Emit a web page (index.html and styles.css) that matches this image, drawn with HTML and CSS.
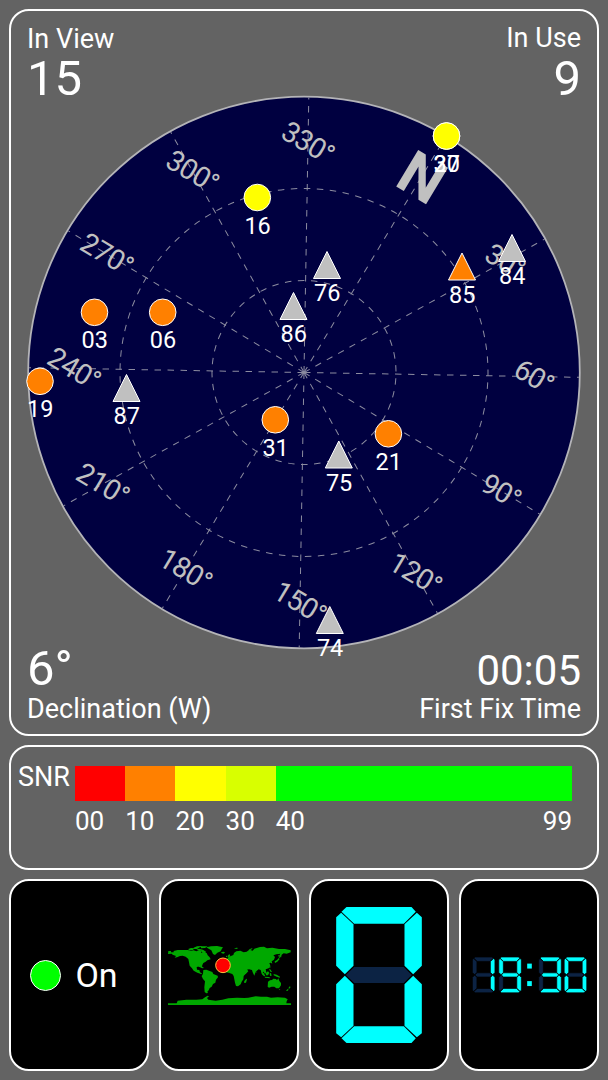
FILE: index.html
```html
<!DOCTYPE html>
<html lang="en">
<head>
    <meta charset="UTF-8">
    <meta name="viewport" content="width=device-width, initial-scale=1.0">
    <title>GPS Status</title>
    <link rel="stylesheet" href="styles.css">
</head>
<body>

<div class="panel sky-panel">
    <div class="sky-header">
        <div class="stat">
            <div class="label">In View</div>
            <div class="value">15</div>
        </div>
        <div class="stat right">
            <div class="label in-use">In Use</div>
            <div class="value">9</div>
        </div>
    </div>

    <svg class="sky" viewBox="11 97 586 553">
        <circle class="disc" cx="304" cy="372.5" r="275.8"/>
        <!-- compass grid, turned to the current heading -->
        <g transform="translate(304 372.5) rotate(31)">
            <g id="grid" class="grid"></g>
            <g id="degrees" class="degrees"></g>
            <text class="north" x="0.5" y="-207">N</text>
        </g>
        <g id="satellites"></g>
    </svg>

    <div class="sky-footer">
        <div class="stat">
            <div class="value">6°</div>
            <div class="label">Declination (W)</div>
        </div>
        <div class="stat right">
            <div class="value time">00:05</div>
            <div class="label">First Fix Time</div>
        </div>
    </div>
</div>

<div class="panel snr-panel">
    <div class="snr-title">SNR</div>
    <div class="snr-scale">
        <div class="step"><div class="bar red"></div>00</div>
        <div class="step"><div class="bar orange"></div>10</div>
        <div class="step"><div class="bar yellow"></div>20</div>
        <div class="step"><div class="bar lime"></div>30</div>
        <div class="step wide"><div class="bar green"></div><span>40</span><span>99</span></div>
    </div>
</div>

<div class="tiles">
    <div class="panel tile status">
        <span class="lamp"></span>
        <span>On</span>
    </div>
    <div class="panel tile">
        <svg class="map" viewBox="21 33 369 177">
            <!-- North America -->
            <path d="M22 48h8v4h8v-4l12-3h30l10 2 8-1 8 3 9 -4 8 2-3 7 8-2 9 2 3 7 6 6 3 6-10 3-5 4-7 4-3 6-2 9-4-5-11 2 1 8 7 1 2 7 7 4-4 1-11-4-11-6-5-7-7-8-2-10-2-10-8-7-9-3-8 1-9 4-7 1 4-5-10-4-3-3-11 1z"/>
            <path d="M82 42l8-3 10 1-4 5-12 1zM98 38l10-4 14-1-8 5-6 4h-9zM106 44l8-3 12 3 9 6-3 6-8-3-3-6-9-1zM118 61l6 1 2 6-5-1zM119 34h21l-8 5-12 1z"/>
            <!-- Greenland and Iceland -->
            <path d="M136 37l14-3 18-1 18 4-4 6-3 6-10 4-7 7-6-3-5-11-8-5z"/>
            <path d="M181 51l8-1 3 3-5 3-6-2zM113 92l9 2 7 5-4 1-12-5z"/>
            <!-- South America -->
            <path d="M127 105l9-1 10 4 8 3 3 6 13 5 1 5-6 7-2 9-7 4-4 8-6 4-3 7-4 4 2 4-5 1-5-4-1-14 2-18-6-7-4-8 4-8z"/>
            <!-- Europe and Asia -->
            <path d="M197 78l3-10 8-4 9-4 2-6 7-5 12-2 10 5 9-2 8-6 10 3 5-6 17-5 12-1 9 5 16-2 20 4 18 0 17 4v6l-12 4-9-1-6 4-2 9-5-6 3-6-12 2-9 3 5 5-3 8-7 5 2 7-5-3-4 1 3 8-5 8-9 3 2 9-4 5-4-7-3 1 3 13-6-8-3-11-6-2-9 7-4 12-5-10-2-7-9-2-6 1 4 5-8 8-8 3-7-11-5-10-8-3-5 3-8-7 1 6-5-3-8-4-11 4z"/>
            <path d="M200 62l5-5 3 6-4 4-4-1zM195 63l3-1v4h-3zM219 40l8-2 5 1-6 3zM263 44l9-4 3 1-8 5zM298 40l7-2 3 3-7 1zM341 79l7-4 5-6 3 3-7 8-7 4zM352 60l3-1 2 10-3-1zM325 95l3-2v5l-3 1z"/>
            <!-- Africa -->
            <path d="M196 86l13-5 12 1 4 4 9 0 8 2 6 12 4 6 8 0-4 8-8 9-1 10-5 7-3 8-8 6-6-1-3-10-2-10-2-10-4-6-9-3-9-2-6-7 1-10z"/>
            <path d="M252 136l4-5 2 2-3 10-5 1-1-4z"/>
            <!-- Indonesia, Australia and New Zealand -->
            <path d="M302 110l6 4 5 9-4 1-6-8zM314 114l7-5 4 4-4 8-6 0zM326 115l4-1 2 8-5 1zM311 125l12 1 5 2-1 2-15-2zM325 101l4 3 4 7-4 0-4-6zM338 117l9 2 10 6-1 3-9-3-9-4zM284 108l3 4-3 1z"/>
            <path d="M321 140l6-4 6-1 4-4 8 1 3 4 4-6 3 8 5 6 0 7-6 9-8 0-6-5-8 0-8 3-4-3z"/>
            <path d="M354 162l4 1-2 3zM386 154l3 2-4 5-3-1zM380 162l3 2-4 4-4-1z"/>
            <!-- Antarctica -->
            <path d="M21 205h26l3-8 26-3 30 0 18-1 8-6 8-5 4 2-6 5 4 5 22 3 20-3 18-4 26-2 22 1 12-1 22-4 16 1 18 0 12 3 20-1 22 1 8 5-3 6-1 6h15v5H21z"/>
            <circle class="position" cx="186" cy="91" r="22"/>
        </svg>
    </div>
    <div class="panel tile">
        <svg id="speed" class="speed" viewBox="0 0 257 408"></svg>
    </div>
    <div class="panel tile">
        <svg id="clock" class="clock" viewBox="0 0 346 109"></svg>
    </div>
</div>

<script>
    const satellites = [
        {id: '30', x: 446.5, y: 136, color: 'yellow'},
        {id: '27', x: 446.5, y: 136, color: 'yellow'},
        {id: '16', x: 257.3, y: 197.5, color: 'yellow'},
        {id: '03', x: 94.5, y: 312.3, color: 'orange'},
        {id: '06', x: 162.7, y: 312.3, color: 'orange'},
        {id: '19', x: 40, y: 381.3, color: 'orange'},
        {id: '31', x: 275.3, y: 419.8, color: 'orange'},
        {id: '21', x: 388.4, y: 433.8, color: 'orange'},
        {id: '76', x: 327, y: 265, color: 'grey', glonass: true},
        {id: '86', x: 293.5, y: 306, color: 'grey', glonass: true},
        {id: '87', x: 126.5, y: 388, color: 'grey', glonass: true},
        {id: '84', x: 512, y: 248, color: 'grey', glonass: true},
        {id: '85', x: 462, y: 266.5, color: 'orange', glonass: true},
        {id: '75', x: 338.8, y: 454.5, color: 'grey', glonass: true},
        {id: '74', x: 329.8, y: 620, color: 'grey', glonass: true}
    ];

    // segments a-g of one digit, 257 x 408
    const segments = {
        a: '31,0 226,0 239,14 203,50 54,50 16,14',
        b: '242,17 257,31 257,176 231,202 205,176 205,52',
        c: '231,206 257,232 257,379 242,391 205,356 205,232',
        d: '54,358 203,358 239,394 226,408 31,408 16,394',
        e: '26,206 52,232 52,356 15,391 0,379 0,232',
        f: '15,17 52,52 52,176 26,202 0,176 0,31',
        g: '54,180 203,180 227,204 203,228 54,228 29,204'
    };
    const digits = {
        '0': 'abcdef',
        '1': 'bc',
        '3': 'abcdg',
        '9': 'abcdfg'
    };

    function drawDigit(number) {
        return Object.keys(segments).map(name => {
            const state = digits[number].includes(name) ? 'on' : 'off';
            return `<polygon class="${state}" points="${segments[name]}"/>`;
        }).join('');
    }

    let grid = '<circle r="92"/><circle r="184"/>';
    let degrees = '';
    for (let deg = 0; deg < 360; deg += 30) {
        const rad = deg * Math.PI / 180;
        const x = Math.sin(rad);
        const y = -Math.cos(rad);
        grid += `<line x1="0" y1="0" x2="${x * 275}" y2="${y * 275}"/>`;
        if (deg > 0) {
            degrees += `<text x="${x * 230}" y="${y * 230 + 10}">${deg}°</text>`;
        }
    }
    document.getElementById('grid').innerHTML = grid;
    document.getElementById('degrees').innerHTML = degrees;

    document.getElementById('satellites').innerHTML = satellites.map(sat => {
        const shape = sat.glonass
            ? '<polygon points="0,-13.5 13.5,13.5 -13.5,13.5"/>'
            : '<circle r="13.3"/>';
        return `<g class="satellite ${sat.color}" transform="translate(${sat.x} ${sat.y})">${shape}<text x="0.3" y="36">${sat.id}</text></g>`;
    }).join('');

    document.getElementById('speed').innerHTML = drawDigit('0');
    document.getElementById('clock').innerHTML =
        [['1', 0], ['9', 80], ['3', 201], ['0', 278]].map(item =>
            `<g transform="translate(${item[1]} 0) scale(0.266)">${drawDigit(item[0])}</g>`
        ).join('') + '<rect class="on" x="166" y="20" width="14" height="15"/><rect class="on" x="166" y="73" width="14" height="15"/>';
</script>
</body>
</html>
```

FILE: styles.css
```css
* {
    box-sizing: border-box;
}

body {
    font-family: Roboto, "Noto Sans", sans-serif;
    font-size: 26px;
    line-height: 30px;
    background: #636363;
    color: #fff;
    height: 1080px;
    margin: 0;
    padding: 9px;
    display: flex;
    flex-direction: column;
    gap: 9px;
    overflow: hidden;
}

.panel {
    border: 2px solid #fff;
    border-radius: 20px;
}

.sky-panel {
    height: 727px;
}

.sky-header, .sky-footer {
    display: flex;
    justify-content: space-between;
    padding: 0 16px;
}

.sky-header {
    height: 86px;
    padding-top: 13px;
}

.right {
    text-align: right;
}

.label {
    font-size: 27px;
}

.in-use {
    margin-top: -1px;
    margin-bottom: 1px;
}

.value {
    font-size: 49px;
    line-height: 50px;
}

.sky-footer .value {
    line-height: 37px;
    margin-bottom: 7px;
}

.sky-footer .time {
    font-size: 42px;
    line-height: 42px;
    margin-bottom: 2px;
}

.sky {
    display: block;
    width: 586px;
    height: 553px;
    overflow: visible;
}

.disc {
    fill: #000040;
    stroke: #b4b4b8;
    stroke-width: 1.8;
}

.grid {
    fill: none;
    stroke: #8c8ca0;
    stroke-width: 1;
    stroke-dasharray: 6.5 6.5;
}

.degrees {
    font-size: 28.5px;
    letter-spacing: -0.9px;
    fill: #c0c0c0;
    text-anchor: middle;
}

.north {
    font-size: 60px;
    font-weight: bold;
    fill: #c0c0c0;
    text-anchor: middle;
}

.satellite {
    stroke: #fff;
    stroke-width: 1;
}

.satellite text {
    font-size: 23.5px;
    fill: #fff;
    stroke: none;
    text-anchor: middle;
}

.satellite.yellow {
    fill: #ffff00;
}

.satellite.orange {
    fill: #ff8000;
}

.satellite.grey {
    fill: #c0c0c0;
}

.snr-panel {
    display: flex;
    height: 125px;
    padding: 19px 25px 0 7px;
}

.snr-title {
    width: 57px;
    font-size: 27px;
    line-height: 22px;
}

.snr-scale {
    flex: 1;
    display: flex;
}

.step {
    width: 50.2px;
}

.wide {
    flex: 1;
    display: flex;
    flex-wrap: wrap;
    justify-content: space-between;
    align-content: flex-start;
}

.bar {
    width: 100%;
    height: 35px;
    margin-bottom: 5px;
}

.red {
    background: #ff0000;
}

.bar.orange {
    background: #ff8000;
}

.bar.yellow {
    background: #ffff00;
}

.lime {
    background: #d8ff00;
}

.green {
    background: #00ff00;
}

.tiles {
    flex: 1;
    display: grid;
    grid-template-columns: repeat(4, 140px);
    justify-content: space-between;
}

.tile {
    background: #000;
    display: flex;
    justify-content: center;
    align-items: center;
}

.status {
    gap: 14px;
    font-size: 34px;
    padding-right: 10px;
}

.lamp {
    width: 31px;
    height: 31px;
    background: #00ff00;
    border: 1px solid #fff;
    border-radius: 50%;
}

.map {
    width: 123px;
    height: 59px;
    fill: #00a800;
}

.position {
    fill: #ff0000;
    stroke: #ffc040;
    stroke-width: 3;
}

.speed {
    width: 86px;
    height: 136px;
}

.clock {
    width: 115px;
    height: 36px;
}

.on {
    fill: #00ffff;
}

.off {
    fill: #0c2344;
}

.clock polygon {
    stroke: #000;
    stroke-width: 8;
}
```
